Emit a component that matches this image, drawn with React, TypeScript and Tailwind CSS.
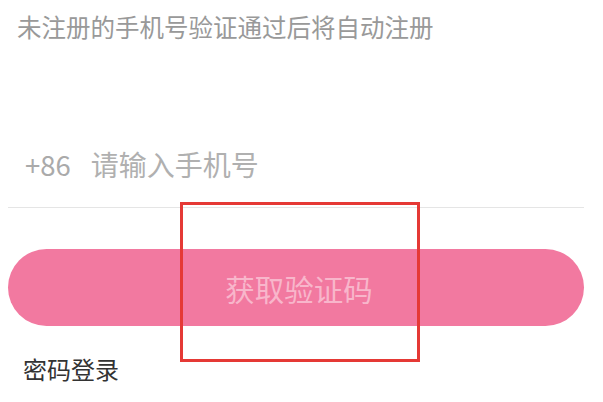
import React from 'react';

const font = { fontFamily: '"Noto Sans CJK SC", "Noto Sans", sans-serif' };

export default function App() {
  return (
    <div className="relative w-[603px] h-[402px] bg-white overflow-hidden" style={font}>
      <div className="pl-[17px] pt-[11px] h-[46px] text-[24.5px] leading-[32px] text-[#999999]">
        未注册的手机号验证通过后将自动注册
      </div>

      <div className="mt-[100px] ml-[8px] w-[576px] border-b border-[#e5e5e5] h-[62px] flex items-start">
        <span className="ml-[17px] text-[27.5px] leading-[36px] text-[#aaaaaa]">+86</span>
        <span className="ml-[20px] text-[28px] leading-[36px] text-[#b0b0b0]">请输入手机号</span>
      </div>

      <button className="mt-[41px] ml-[8px] w-[576px] h-[77px] rounded-full bg-[#f279a0] flex items-center justify-center pl-[6px]">
        <span className="text-[29.5px] leading-[40px] text-[#f8b6cb]">获取验证码</span>
      </button>

      <div className="pl-[23px] pt-[27px] text-[24px] leading-[32px] text-[#333333]">密码登录</div>

      <div className="absolute left-[180px] top-[202px] w-[240px] h-[160px] border-[3px] border-[#e53935]" />
    </div>
  );
}
